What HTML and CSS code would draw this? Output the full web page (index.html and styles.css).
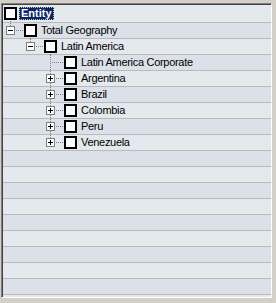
FILE: index.html
```html
<!DOCTYPE html>
<html lang="en">
<head>
    <meta charset="UTF-8">
    <title>Entity Tree</title>
    <link rel="stylesheet" href="styles.css">
</head>
<body>
    <div class="frame">
        <div class="grid">
            <div class="row head">
                <span class="check open"></span>
                <span class="label selected">Entity</span>
            </div>
            <div class="row">
                <span class="cell elbow"><span class="toggle minus"></span></span>
                <span class="check open"></span>
                <span class="label">Total Geography</span>
            </div>
            <div class="row">
                <span class="cell"></span>
                <span class="cell elbow"><span class="toggle minus"></span></span>
                <span class="check open"></span>
                <span class="label">Latin America</span>
            </div>
            <div class="row">
                <span class="cell"></span>
                <span class="cell"></span>
                <span class="cell tee"></span>
                <span class="check"></span>
                <span class="label">Latin America Corporate</span>
            </div>
            <div class="row">
                <span class="cell"></span>
                <span class="cell"></span>
                <span class="cell tee"><span class="toggle plus"></span></span>
                <span class="check"></span>
                <span class="label">Argentina</span>
            </div>
            <div class="row">
                <span class="cell"></span>
                <span class="cell"></span>
                <span class="cell tee"><span class="toggle plus"></span></span>
                <span class="check"></span>
                <span class="label">Brazil</span>
            </div>
            <div class="row">
                <span class="cell"></span>
                <span class="cell"></span>
                <span class="cell tee"><span class="toggle plus"></span></span>
                <span class="check"></span>
                <span class="label">Colombia</span>
            </div>
            <div class="row">
                <span class="cell"></span>
                <span class="cell"></span>
                <span class="cell tee"><span class="toggle plus"></span></span>
                <span class="check"></span>
                <span class="label">Peru</span>
            </div>
            <div class="row">
                <span class="cell"></span>
                <span class="cell"></span>
                <span class="cell elbow"><span class="toggle plus"></span></span>
                <span class="check"></span>
                <span class="label">Venezuela</span>
            </div>
            <div class="row"></div>
            <div class="row"></div>
            <div class="row"></div>
            <div class="row"></div>
            <div class="row"></div>
            <div class="row"></div>
            <div class="row"></div>
            <div class="row"></div>
            <div class="row"></div>
            <div class="row"></div>
        </div>
    </div>
</body>
</html>
```

FILE: styles.css
```css
* {
    margin: 0;
    padding: 0;
    box-sizing: border-box;
}

body {
    background-color: #d4d0c8;
    font-family: 'Liberation Sans', Arial, sans-serif;
    font-size: 11px;
    color: #000;
}

/* sunken outer frame */
.frame {
    width: 271px;
    height: 295px;
    margin: 3px 0 0 1px;
    border-top: 1px solid #808080;
    border-left: 1px solid #808080;
    border-right: 1px solid #ffffff;
    border-bottom: 1px solid #ffffff;
}

.grid {
    height: 100%;
    border-top: 1px solid #404040;
    border-left: 1px solid #404040;
    overflow: hidden;
}

.row {
    display: flex;
    align-items: center;
    height: 16px;
    background-color: #e4e9ee;
    border-bottom: 1px solid #b9b9b9;
}

.row:nth-child(even) {
    background-color: #dce1e9;
}

.row.head {
    height: 18px;
}

/* tree connector cells, 20px per level */
.cell {
    position: relative;
    flex: none;
    width: 20px;
    height: 100%;
}

.cell.tee::before,
.cell.elbow::before {
    content: "";
    position: absolute;
    left: 7px;
    top: 0;
    bottom: 0;
    width: 1px;
    background: repeating-linear-gradient(to bottom, #808080 0 1px, transparent 1px 2px);
}

.cell.elbow::before {
    bottom: 7px;
}

.cell.tee::after,
.cell.elbow::after {
    content: "";
    position: absolute;
    left: 9px;
    right: 0;
    top: 7px;
    height: 1px;
    background: repeating-linear-gradient(to right, #808080 0 1px, transparent 1px 2px);
}

.toggle {
    position: absolute;
    left: 3px;
    top: 3px;
    width: 9px;
    height: 9px;
    border: 1px solid #808080;
    background-color: #ffffff;
    z-index: 1;
}

.toggle::before {
    content: "";
    position: absolute;
    left: 1px;
    top: 3px;
    width: 5px;
    height: 1px;
    background-color: #000;
}

.toggle.plus::after {
    content: "";
    position: absolute;
    left: 3px;
    top: 1px;
    width: 1px;
    height: 5px;
    background-color: #000;
}

.check {
    position: relative;
    flex: none;
    width: 13px;
    height: 13px;
    margin: 0 2px 0 1px;
    border: 2px solid #000;
    background-color: #ffffff;
}

.check.open::after {
    content: "";
    position: absolute;
    left: 4px;
    top: calc(100% + 3px);
    width: 1px;
    height: 1px;
    background-color: #808080;
}

.label {
    padding: 0 1px;
    line-height: 11px;
    border: 1px dotted transparent;
    white-space: nowrap;
    letter-spacing: -0.3px;
}

.label.selected {
    background-color: #0a246a;
    color: #ffffff;
    font-weight: bold;
    letter-spacing: 0;
    border-color: #c8c4b0;
}
```
